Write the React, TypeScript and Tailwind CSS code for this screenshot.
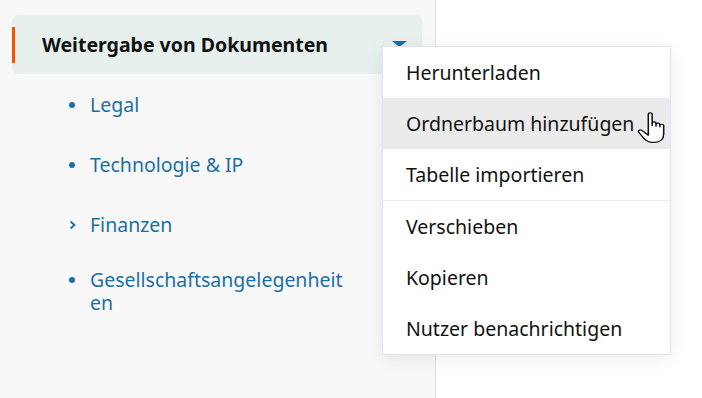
import React from "react";

const font = { fontFamily: '"Noto Sans", "Open Sans", sans-serif' };

function Bullet() {
  return (
    <span className="flex w-[21px] h-[23px] items-center shrink-0">
      <span className="w-[6px] h-[6px] rounded-full bg-[#1a6fa6]" />
    </span>
  );
}

function Chevron() {
  return (
    <span className="flex w-[21px] h-[23px] items-center shrink-0">
      <svg width="10" height="12" viewBox="0 0 10 12" className="-ml-[1px]">
        <path d="M2.5 2.5 L6.5 6 L2.5 9.5" fill="none" stroke="#1a6fa6" strokeWidth="1.8" />
      </svg>
    </span>
  );
}

export default function App() {
  const items: { label: string; icon: "dot" | "chev"; extra?: string }[] = [
    { label: "Legal", icon: "dot" },
    { label: "Technologie & IP", icon: "dot" },
    { label: "Finanzen", icon: "chev" },
    { label: "Gesellschaftsangelegenheiten", icon: "dot", extra: "-mt-[5px]" },
  ];
  return (
    <div className="relative w-[702px] h-[398px] flex bg-white overflow-hidden" style={font}>
      <div className="w-[436px] h-full bg-[#f8f8f8] border-r border-[#e0e0e0] pt-[15px] pl-[12px] pr-[13px]">
        <div className="relative h-[59px] rounded-[6px] bg-[#e8f0ee] flex items-center">
          <div className="absolute left-0 top-[12px] h-[36px] w-[3px] bg-[#ff4f00]" />
          <span className="pl-[30px] text-[19.5px] font-bold text-[#111]">Weitergabe von Dokumenten</span>
          <svg width="16" height="6" viewBox="0 0 16 6" className="absolute left-[380px] top-[26px]">
            <path d="M0 0 H15 L7.5 6 Z" fill="#1a6fa6" />
          </svg>
        </div>
        <div className="flex flex-col gap-[37px] pt-[19px] pl-[57px]">
          {items.map((it) => (
            <div key={it.label} className={`flex items-start ${it.extra ?? ""}`}>
              {it.icon === "dot" ? <Bullet /> : <Chevron />}
              <span className="w-[258px] text-[19.5px] leading-[23px] text-[#1a6fa6] break-all">{it.label}</span>
            </div>
          ))}
        </div>
      </div>
      <div className="flex-1" />
      <div className="absolute left-[382px] top-[46px] w-[289px] bg-white border border-[#e3e5ee] shadow-[0_4px_16px_rgba(0,0,0,0.08)]">
        {["Herunterladen", "Ordnerbaum hinzufügen", "Tabelle importieren"].map((t, i) => (
          <div
            key={t}
            className={`h-[51px] flex items-center pl-[23px] text-[19.5px] text-[#111] ${i === 1 ? "bg-[#ebebeb]" : ""}`}
          >
            {t}
          </div>
        ))}
        <div className="h-px bg-[#e8e9f0]" />
        {["Verschieben", "Kopieren", "Nutzer benachrichtigen"].map((t) => (
          <div key={t} className="h-[51px] flex items-center pl-[23px] text-[19.5px] text-[#111]">
            {t}
          </div>
        ))}
        <svg
          width="40"
          height="36"
          viewBox="0 0 26 30"
          preserveAspectRatio="none"
          className="absolute left-[253px] top-[63px]"
        >
          <path
            d="M8 3.5 C8 2 10.5 2 10.5 3.5 V13 V11 C10.5 9.5 13 9.5 13 11 V13.5 V12 C13 10.5 15.5 10.5 15.5 12 V14 V13 C15.5 11.5 18 11.5 18 13 V20 C18 24 16 27 12 27 H10.5 C8 27 6.5 25.5 5 23.5 L1.8 18.5 C1 17.2 2.6 15.8 3.8 17 L8 21 Z"
            fill="white"
            stroke="#111"
            strokeWidth="1"
            strokeLinejoin="round"
          />
        </svg>
      </div>
    </div>
  );
}
